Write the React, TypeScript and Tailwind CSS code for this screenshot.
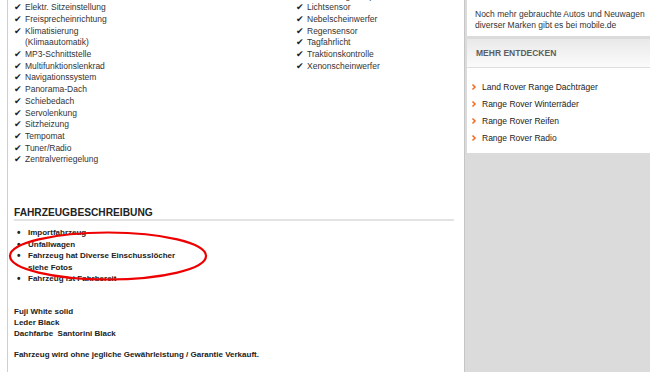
import React from "react";

const leftFeatures = [
  "Elektr. Fensterheber",
  "Elektr. Sitzeinstellung",
  "Freisprecheinrichtung",
  "Klimatisierung\n(Klimaautomatik)",
  "MP3-Schnittstelle",
  "Multifunktionslenkrad",
  "Navigationssystem",
  "Panorama-Dach",
  "Schiebedach",
  "Servolenkung",
  "Sitzheizung",
  "Tempomat",
  "Tuner/Radio",
  "Zentralverriegelung",
];

const rightFeatures = [
  "Elektr. Wegfahrsperre",
  "Lichtsensor",
  "Nebelscheinwerfer",
  "Regensensor",
  "Tagfahrlicht",
  "Traktionskontrolle",
  "Xenonscheinwerfer",
];

const notes = ["Importfahrzeug", "Unfallwagen", "Fahrzeug hat Diverse Einschusslöcher\nsiehe Fotos", "Fahrzeug ist Fahrbereit"];

const links = ["Land Rover Range Dachträger", "Range Rover Winterräder", "Range Rover Reifen", "Range Rover Radio"];

function FeatureList({ items }: { items: string[] }) {
  return (
    <ul>
      {items.map((f) => (
        <li key={f} className="flex">
          <span className="w-[11px] shrink-0 text-[8.5px] text-[#222]">✔</span>
          <span className="whitespace-pre-line">{f}</span>
        </li>
      ))}
    </ul>
  );
}

export default function App() {
  return (
    <div className="flex w-[650px] h-[372px] overflow-hidden bg-white text-[#333] text-[8.5px] font-['Liberation_Sans',Arial,sans-serif]">
      <div className="w-[7px] shrink-0" />

      <main className="relative w-[457px] shrink-0 border-l border-[#d0d0d0] pl-[6px] pr-[10px]">
        <div className="grid grid-cols-[282px_1fr] mt-[-9.5px] leading-[11.7px]">
          <FeatureList items={leftFeatures} />
          <FeatureList items={rightFeatures} />
        </div>

        <h2 className="mt-[41px] text-[10.2px] leading-[12px] font-bold text-[#222] border-b-2 border-[#e3e3e3]">
          FAHRZEUGBESCHREIBUNG
        </h2>

        <ul className="mt-[6px] text-[8px] leading-[11.5px] font-bold text-[#222]">
          {notes.map((n) => (
            <li key={n} className="flex">
              <span className="w-[14px] shrink-0 pl-[3px] text-[10px] leading-[11.5px]">•</span>
              <span className="whitespace-pre-line">{n}</span>
            </li>
          ))}
        </ul>

        <div className="mt-[21px] text-[8px] leading-[11px] font-bold text-[#222]">
          <p>Fuji White solid</p>
          <p>Leder Black</p>
          <p className="whitespace-pre">Dachfarbe  Santorini Black</p>
          <p className="mt-[10px]">Fahrzeug wird ohne jegliche Gewährleistung / Garantie Verkauft.</p>
        </div>

        <svg className="absolute left-[-8px] top-[228px] pointer-events-none" width="220" height="60" viewBox="0 0 220 60">
          <ellipse cx="108" cy="28" rx="98" ry="23.5" fill="none" stroke="#ee0000" strokeWidth="2.2" />
        </svg>
      </main>

      <aside className="flex-1 bg-[#dbdbdb] border-l border-[#c6c6c6] pl-[2px]">
        <div className="bg-white h-[36px] pl-[8px] pt-[8.5px] leading-[11px]">
          <p>Noch mehr gebrauchte Autos und Neuwagen</p>
          <p>diverser Marken gibt es bei mobile.de</p>
        </div>
        <div className="mt-[3px] h-[29px] flex items-center pl-[9px] bg-gradient-to-b from-[#e9e9e9] to-[#fbfbfb] border-b border-[#dedede] text-[8.5px] font-bold text-[#5e5e5e]">
          MEHR ENTDECKEN
        </div>
        <ul className="bg-white pt-[10.5px] pb-[6.5px] leading-[17px] text-[#222]">
          {links.map((l) => (
            <li key={l} className="flex items-center pl-[4px]">
              <svg width="11" height="8" viewBox="0 0 11 8" className="shrink-0">
                <polyline points="1.5,1.5 4,4 1.5,6.5" fill="none" stroke="#f37021" strokeWidth="1.6" />
              </svg>
              <span>{l}</span>
            </li>
          ))}
        </ul>
      </aside>
    </div>
  );
}
